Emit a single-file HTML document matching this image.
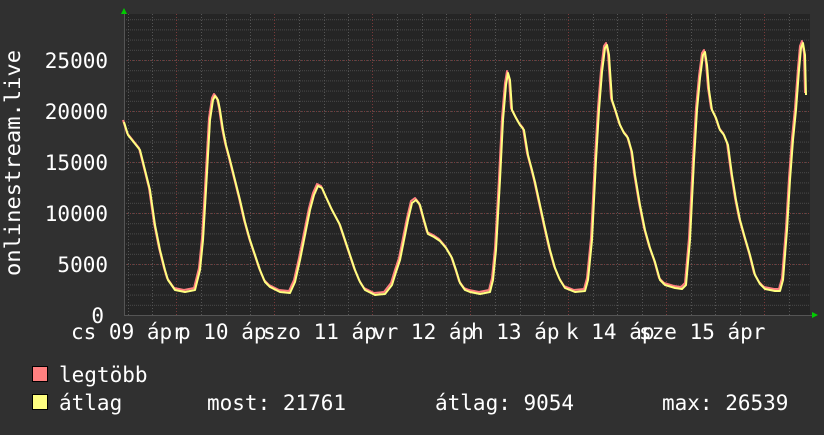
<!DOCTYPE html>
<html><head><meta charset="utf-8"><style>
html,body{margin:0;padding:0;background:#303030;}
body{width:824px;height:430px;overflow:hidden;}
text{font-family:"DejaVu Sans Mono","Liberation Mono",monospace;fill:#fff;}
</style></head><body>
<svg width="824" height="430" xmlns="http://www.w3.org/2000/svg">
<defs>
<pattern id="minor" x="0" y="315" width="824" height="10.2" patternUnits="userSpaceOnUse">
<line x1="0" y1="0.5" x2="824" y2="0.5" stroke="#4a4a4a" stroke-width="1" stroke-dasharray="1,1"/>
</pattern>
</defs>
<rect x="124" y="14" width="686" height="301" fill="#252525"/>
<rect x="124" y="14" width="686" height="301" fill="url(#minor)"/>
<g stroke="#555" stroke-dasharray="1,2" stroke-width="1">
<line x1="128.5" y1="14" x2="128.5" y2="315"/><line x1="152.5" y1="14" x2="152.5" y2="315"/>
<line x1="201.5" y1="14" x2="201.5" y2="315"/><line x1="226.5" y1="14" x2="226.5" y2="315"/><line x1="250.5" y1="14" x2="250.5" y2="315"/>
<line x1="299.5" y1="14" x2="299.5" y2="315"/><line x1="324.5" y1="14" x2="324.5" y2="315"/><line x1="348.5" y1="14" x2="348.5" y2="315"/>
<line x1="397.5" y1="14" x2="397.5" y2="315"/><line x1="422.5" y1="14" x2="422.5" y2="315"/><line x1="446.5" y1="14" x2="446.5" y2="315"/>
<line x1="495.5" y1="14" x2="495.5" y2="315"/><line x1="520.5" y1="14" x2="520.5" y2="315"/><line x1="544.5" y1="14" x2="544.5" y2="315"/>
<line x1="593.5" y1="14" x2="593.5" y2="315"/><line x1="617.5" y1="14" x2="617.5" y2="315"/><line x1="642.5" y1="14" x2="642.5" y2="315"/>
<line x1="691.5" y1="14" x2="691.5" y2="315"/><line x1="715.5" y1="14" x2="715.5" y2="315"/><line x1="740.5" y1="14" x2="740.5" y2="315"/>
<line x1="789.5" y1="14" x2="789.5" y2="315"/>
</g>
<g stroke="#7a3a3a" stroke-dasharray="1,2" stroke-width="1">
<line x1="124" y1="60.5" x2="810" y2="60.5"/><line x1="124" y1="111.5" x2="810" y2="111.5"/>
<line x1="124" y1="162.5" x2="810" y2="162.5"/><line x1="124" y1="213.5" x2="810" y2="213.5"/>
<line x1="124" y1="264.5" x2="810" y2="264.5"/>
<line x1="176.5" y1="14" x2="176.5" y2="315"/><line x1="274.5" y1="14" x2="274.5" y2="315"/>
<line x1="372.5" y1="14" x2="372.5" y2="315"/><line x1="470.5" y1="14" x2="470.5" y2="315"/>
<line x1="568.5" y1="14" x2="568.5" y2="315"/><line x1="666.5" y1="14" x2="666.5" y2="315"/>
<line x1="764.5" y1="14" x2="764.5" y2="315"/>
</g>
<line x1="124" y1="315.5" x2="814" y2="315.5" stroke="#555"/>
<line x1="124.5" y1="12" x2="124.5" y2="315" stroke="#555"/>
<polygon points="121,14 127,14 124,8" fill="#0c0"/>
<polygon points="812,312 812,318 818,315" fill="#0c0"/>
<g fill="none" stroke-width="2" stroke-linejoin="round">
<polyline stroke="#ff8080" transform="translate(-1,-2)" points="124,122 128,135 132,140 140,150 145,170 150,190 155,225 160,250 165,270 168,280 175,290 185,292 195,290 200,270 203,240 206,190 210,120 213,100 215,96 218,100 220,110 223,130 226,145 230,160 235,180 240,200 245,222 250,240 255,255 260,270 265,282 270,287 280,292 290,293 295,282 300,260 305,235 310,210 314,195 318,186 322,188 326,197 332,210 340,225 345,240 350,255 355,270 360,282 365,290 375,295 385,294 392,285 396,272 400,260 404,240 408,220 412,203 416,200 420,205 424,220 428,234 434,237 440,241 446,248 452,258 456,270 460,283 465,290 470,292 480,294 490,292 493,280 496,250 500,180 503,120 506,85 508,73 510,80 512,110 516,118 520,125 524,130 528,155 532,170 535,182 540,205 545,228 550,250 555,268 560,280 565,288 575,292 585,291 588,280 592,240 596,160 599,110 602,72 605,48 607,45 609,55 612,100 616,112 620,125 624,133 628,138 632,152 635,175 640,205 645,230 650,248 655,262 660,280 665,285 675,288 682,289 686,285 690,240 694,160 697,110 700,78 703,55 705,52 707,65 709,90 712,110 716,118 720,130 724,135 728,145 732,175 736,200 740,220 745,238 750,255 755,275 760,284 765,289 775,291 780,291 783,280 787,230 790,180 793,140 796,110 799,70 801,48 803,43 805,55 806,95"/>
<polyline stroke="#ffff80" points="124,122 128,135 132,140 140,150 145,170 150,190 155,225 160,250 165,270 168,280 175,290 185,292 195,290 200,270 203,240 206,190 210,120 213,100 215,96 218,100 220,110 223,130 226,145 230,160 235,180 240,200 245,222 250,240 255,255 260,270 265,282 270,287 280,292 290,293 295,282 300,260 305,235 310,210 314,195 318,186 322,188 326,197 332,210 340,225 345,240 350,255 355,270 360,282 365,290 375,295 385,294 392,285 396,272 400,260 404,240 408,220 412,203 416,200 420,205 424,220 428,234 434,237 440,241 446,248 452,258 456,270 460,283 465,290 470,292 480,294 490,292 493,280 496,250 500,180 503,120 506,85 508,73 510,80 512,110 516,118 520,125 524,130 528,155 532,170 535,182 540,205 545,228 550,250 555,268 560,280 565,288 575,292 585,291 588,280 592,240 596,160 599,110 602,72 605,48 607,45 609,55 612,100 616,112 620,125 624,133 628,138 632,152 635,175 640,205 645,230 650,248 655,262 660,280 665,285 675,288 682,289 686,285 690,240 694,160 697,110 700,78 703,55 705,52 707,65 709,90 712,110 716,118 720,130 724,135 728,145 732,175 736,200 740,220 745,238 750,255 755,275 760,284 765,289 775,291 780,291 783,280 787,230 790,180 793,140 796,110 799,70 801,48 803,43 805,55 806,95"/>
</g>
<g font-size="21" text-anchor="end">
<text x="108" y="68">25000</text><text x="108" y="119">20000</text>
<text x="108" y="170">15000</text><text x="108" y="221">10000</text>
<text x="108" y="272">5000</text><text x="104" y="323">0</text>
</g>
<text transform="translate(20,163) rotate(-90)" font-size="21" text-anchor="middle" textLength="226" lengthAdjust="spacingAndGlyphs">onlinestream.live</text>
<g font-size="21">
<text x="71" y="339">cs 09 ápr</text>
<text x="178" y="339">p 10 áp</text>
<text x="263" y="339">szo 11 áp</text>
<text x="373" y="339">vr 12 áp</text>
<text x="471" y="339">h 13 áp</text>
<text x="566" y="339">k 14 áp</text>
<text x="639" y="339">sze 15 ápr</text>
</g>
<rect x="32.5" y="366.5" width="15" height="15" fill="#ff8080" stroke="#000"/>
<rect x="32.5" y="394.5" width="15" height="15" fill="#ffff80" stroke="#000"/>
<g font-size="21">
<text x="59" y="382">legtöbb</text>
<text x="59" y="410">átlag</text>
<text x="207" y="410">most: 21761</text>
<text x="435" y="410">átlag: 9054</text>
<text x="662" y="410">max: 26539</text>
</g>
</svg>
</body></html>
